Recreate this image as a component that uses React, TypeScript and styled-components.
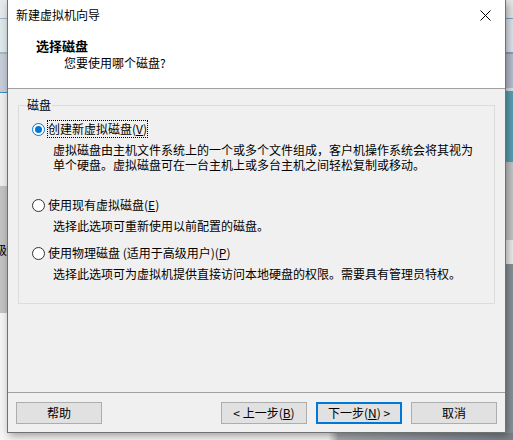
import React from 'react';
import styled, { createGlobalStyle } from 'styled-components';

const GlobalStyle = createGlobalStyle`
  html, body {
    margin: 0;
    padding: 0;
    background: #f4f4f4;
  }
  body {
    font-family: "Noto Sans CJK SC", "Microsoft YaHei", sans-serif;
    font-size: 12px;
    color: #000;
  }
`;

const Desktop = styled.div`
  display: grid;
  grid-template-columns: 7px 499px 7px;
  grid-template-rows: 433px 7px;
  width: 513px;
  height: 440px;
  overflow: hidden;
`;

const Strip = styled.div`
  display: flex;
  flex-direction: column;
  overflow: hidden;
`;

const Block = styled.div<{ $h?: number; $bg: string }>`
  height: ${(p) => (p.$h ? `${p.$h}px` : 'auto')};
  flex: ${(p) => (p.$h ? 'none' : '1')};
  background: ${(p) => p.$bg};
  display: flex;
  justify-content: flex-end;
  align-items: center;
  overflow: hidden;
  white-space: nowrap;
  font-size: 12px;
  line-height: 14px;
`;

const BottomStrip = styled.div`
  grid-column: 1 / 4;
  background: linear-gradient(to right, #f6f6f6 64%, #a4aaaf 66%, #7a8288);
`;

const Window = styled.div`
  position: relative;
  z-index: 1;
  display: flex;
  flex-direction: column;
  border: 1px solid #707070;
  border-top: none;
  background: #f0f0f0;
  box-shadow: 2px 3px 8px rgba(0, 0, 0, 0.35);
`;

const TitleBar = styled.div`
  height: 30px;
  display: flex;
  align-items: center;
  justify-content: space-between;
  padding: 0 8px;
  background: #fff;
  line-height: 16px;
`;

const CloseBtn = styled.div`
  width: 22px;
  display: flex;
  justify-content: center;
  align-items: center;
  margin-right: 1px;
`;

const Header = styled.div`
  height: 58px;
  box-sizing: content-box;
  background: #fff;
  border-bottom: 1px solid #a0a0a0;
  padding-top: 0;
  display: flex;
  flex-direction: column;
`;

const HeaderTitle = styled.div`
  margin: 8px 0 0 28px;
  font-size: 13px;
  font-weight: bold;
  line-height: 16px;
`;

const HeaderSub = styled.div`
  margin: 1px 0 0 56px;
  line-height: 16px;
`;

const Body = styled.div`
  height: 303px;
  box-sizing: border-box;
  padding: 8px 10px 0;
`;

const Group = styled.fieldset`
  margin: 0;
  padding: 7px 0 22px;
  border: 1px solid #dcdcdc;
  min-width: 0;
`;

const Legend = styled.legend`
  margin-left: 7px;
  padding: 0 1px;
  line-height: 16px;
`;

const Option = styled.div<{ $gap: number }>`
  margin-top: ${(p) => p.$gap}px;
`;

const OptionRow = styled.label`
  display: flex;
  align-items: center;
  height: 18px;
  padding-left: 13px;
`;

const Radio = styled.span<{ $checked?: boolean }>`
  box-sizing: border-box;
  width: 13px;
  height: 13px;
  border-radius: 50%;
  border: 1px solid ${(p) => (p.$checked ? '#0078d7' : '#333')};
  background: #fff;
  margin-right: 2px;
  display: flex;
  align-items: center;
  justify-content: center;

  &::after {
    content: '';
    display: ${(p) => (p.$checked ? 'block' : 'none')};
    width: 7px;
    height: 7px;
    border-radius: 50%;
    background: #0078d7;
  }
`;

const OptionLabel = styled.span<{ $focus?: boolean }>`
  line-height: 16px;
  border: 1px dotted ${(p) => (p.$focus ? '#000' : 'transparent')};
`;

const Desc = styled.div`
  margin: 4px 20px 0 34px;
  line-height: 15px;
`;

const U = styled.span`
  text-decoration: underline;
  text-underline-offset: 1px;
`;

const Footer = styled.div`
  flex: 1;
  border-top: 1px solid #a0a0a0;
  display: flex;
  align-items: flex-start;
  padding: 9px 8px 0;
  gap: 9px;
`;

const Spacer = styled.div`
  flex: 1;
`;

const Button = styled.button<{ $default?: boolean }>`
  box-sizing: border-box;
  width: 86px;
  height: 22px;
  padding: 0;
  background: #e1e1e1;
  border: ${(p) => (p.$default ? '2px solid #0078d7' : '1px solid #adadad')};
  font: inherit;
  font-size: 12px;
  line-height: 16px;
  color: #000;
`;

const CloseIcon = () => (
  <svg width="11" height="11" viewBox="0 0 11 11">
    <path d="M0.5 0.5 L10.5 10.5 M10.5 0.5 L0.5 10.5" stroke="#000" strokeWidth="1" fill="none" />
  </svg>
);

export default function App() {
  return (
    <>
      <GlobalStyle />
      <Desktop>
        <Strip>
          <Block $h={18} $bg="#e7e8ea" />
          <Block $h={1} $bg="#9fb4c8" />
          <Block $h={33} $bg="#dde8ea" />
          <Block $h={2} $bg="#a9b6c4" />
          <Block $h={38} $bg="#c6ccd8" />
          <Block $h={1} $bg="#3c8dc4" />
          <Block $h={93} $bg="#eeeeee" />
          <Block $h={127} $bg="#c2c2c2">级</Block>
          <Block $bg="#f4f4f4" />
        </Strip>
        <Window>
          <TitleBar>
            <span>新建虚拟机向导</span>
            <CloseBtn>
              <CloseIcon />
            </CloseBtn>
          </TitleBar>
          <Header>
            <HeaderTitle>选择磁盘</HeaderTitle>
            <HeaderSub>您要使用哪个磁盘?</HeaderSub>
          </Header>
          <Body>
            <Group>
              <Legend>磁盘</Legend>
              <Option $gap={0}>
                <OptionRow>
                  <Radio $checked />
                  <OptionLabel $focus>
                    创建新虚拟磁盘(<U>V</U>)
                  </OptionLabel>
                </OptionRow>
                <Desc>
                  虚拟磁盘由主机文件系统上的一个或多个文件组成，客户机操作系统会将其视为单个硬盘。虚拟磁盘可在一台主机上或多台主机之间轻松复制或移动。
                </Desc>
              </Option>
              <Option $gap={24}>
                <OptionRow>
                  <Radio />
                  <OptionLabel>
                    使用现有虚拟磁盘(<U>E</U>)
                  </OptionLabel>
                </OptionRow>
                <Desc>选择此选项可重新使用以前配置的磁盘。</Desc>
              </Option>
              <Option $gap={11}>
                <OptionRow>
                  <Radio />
                  <OptionLabel>
                    使用物理磁盘 (适用于高级用户)(<U>P</U>)
                  </OptionLabel>
                </OptionRow>
                <Desc>选择此选项可为虚拟机提供直接访问本地硬盘的权限。需要具有管理员特权。</Desc>
              </Option>
            </Group>
          </Body>
          <Footer>
            <Button>帮助</Button>
            <Spacer />
            <Button>
              &lt; 上一步(<U>B</U>)
            </Button>
            <Button $default>
              下一步(<U>N</U>) &gt;
            </Button>
            <Button>取消</Button>
          </Footer>
        </Window>
        <Strip>
          <Block $h={18} $bg="#e4e6e8" />
          <Block $h={1} $bg="#7fa0c0" />
          <Block $h={33} $bg="#dfe6ec" />
          <Block $h={2} $bg="#8aa0b4" />
          <Block $h={34} $bg="#b8bfd0" />
          <Block $h={3} $bg="#e0e4e8" />
          <Block $h={71} $bg="#5aa0b5" />
          <Block $h={78} $bg="#c4c6c8" />
          <Block $h={24} $bg="#eeeeee" />
          <Block $bg="#8a9298" />
        </Strip>
        <BottomStrip />
      </Desktop>
    </>
  );
}
